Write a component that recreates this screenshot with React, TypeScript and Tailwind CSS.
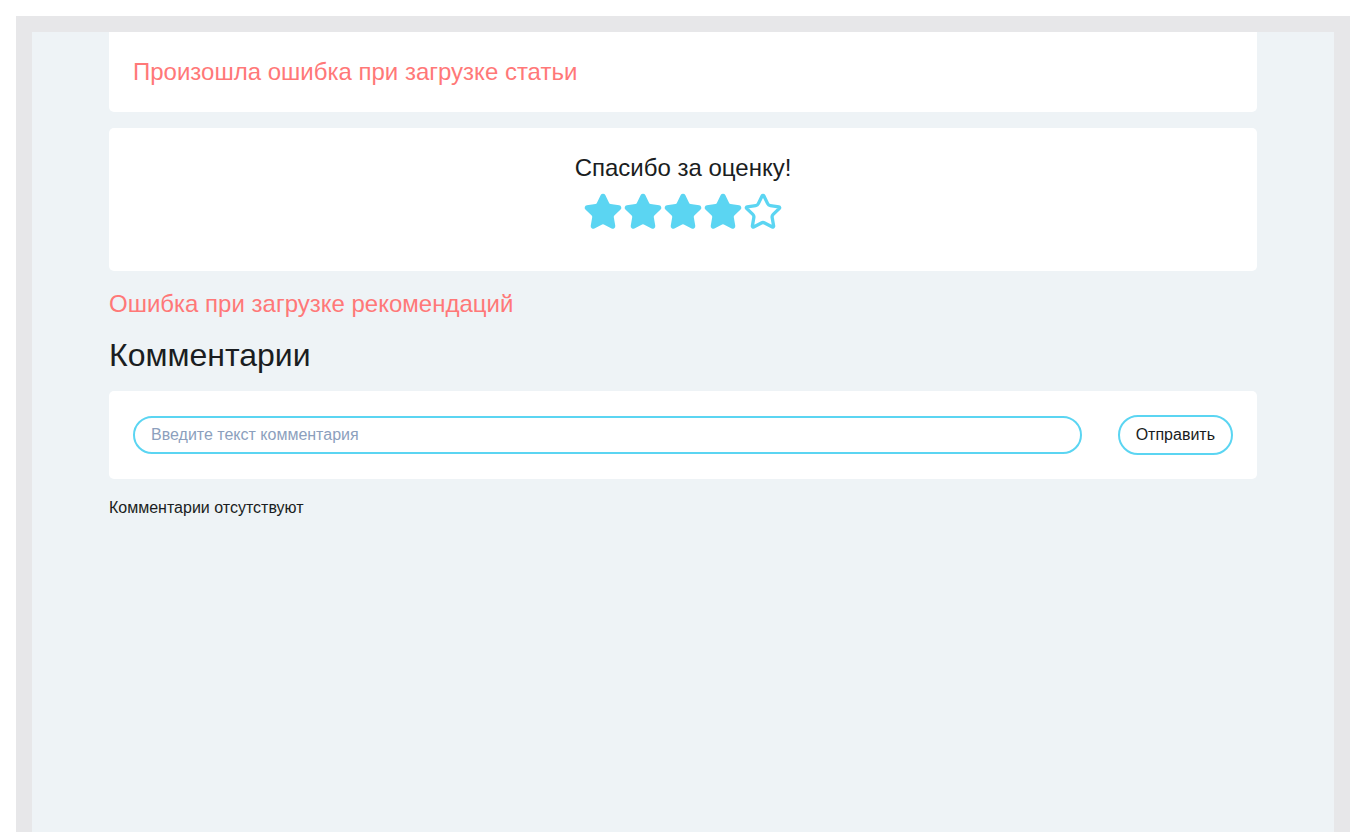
import React, { useState } from "react";
import { Star } from "lucide-react";

const cardClass = "bg-white rounded-b-[5px]";

function Rating({ value }: { value: number }) {
  return (
    <div className="flex justify-center">
      {[1, 2, 3, 4, 5].map((i) => (
        <Star
          key={i}
          size={40}
          strokeWidth={2}
          className="text-[#5bd5f2]"
          fill={i <= value ? "currentColor" : "none"}
        />
      ))}
    </div>
  );
}

export default function App() {
  const [text, setText] = useState("");

  return (
    <div className="min-h-[832px] bg-white pt-4 px-4 font-['Liberation_Sans',Arial,sans-serif]">
      <div className="bg-[#e7e7e9] px-4 pt-4 min-h-[816px]">
        <div className="bg-[#eef3f6] min-h-[800px]">
          <div className="mx-auto w-[1148px] flex flex-col">
            {/* Article error */}
            <div className={`${cardClass} h-[80px] flex items-center px-6`}>
              <p className="text-[24px] text-[#ff7878]">Произошла ошибка при загрузке статьи</p>
            </div>

            {/* Rating */}
            <div className="bg-white rounded-[5px] mt-4 h-[143px] flex flex-col items-center pt-[24px]">
              <h3 className="text-[24px] leading-[32px] text-[#1a1d21]">Спасибо за оценку!</h3>
              <div className="mt-[8px]">
                <Rating value={4} />
              </div>
            </div>

            <p className="mt-[17px] text-[24px] leading-[32px] text-[#ff7878]">
              Ошибка при загрузке рекомендаций
            </p>

            <h2 className="mt-[15px] text-[32px] leading-[40px] text-[#1a1d21]">Комментарии</h2>

            {/* Comment form */}
            <div className="bg-white rounded-[5px] mt-[16px] h-[88px] flex items-center px-6 gap-9">
              <input
                value={text}
                onChange={(e) => setText(e.target.value)}
                placeholder="Введите текст комментария"
                className="flex-1 h-[38px] rounded-full border-2 border-[#5bd5f2] px-4 text-[16px] text-[#1a1d21] placeholder:text-[#8c9fbd] outline-none"
              />
              <button className="h-[40px] px-4 rounded-full border-2 border-[#5bd5f2] text-[16px] text-[#1a1d21] bg-white">
                Отправить
              </button>
            </div>

            <p className="mt-[17px] text-[16px] text-[#1a1d21]">Комментарии отсутствуют</p>
          </div>
        </div>
      </div>
    </div>
  );
}
